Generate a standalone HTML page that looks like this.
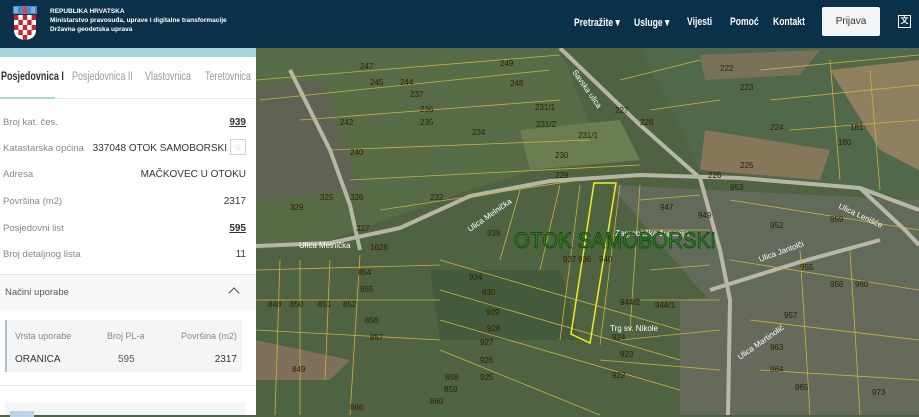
<!DOCTYPE html>
<html><head><meta charset="utf-8"><style>
*{margin:0;padding:0;box-sizing:border-box}
body{width:919px;height:415px;overflow:hidden;font-family:"Liberation Sans",sans-serif;position:relative;background:#4f6242}
.hdr{position:absolute;left:0;top:0;width:919px;height:48px;background:#0b3049;color:#fff}
.hdr .t{position:absolute;left:50px;font-size:6.5px;font-weight:bold}
.nav{position:absolute;top:16px;font-size:11px;font-weight:bold;transform:scaleX(0.78);transform-origin:left top;white-space:nowrap}
.btn{position:absolute;left:822px;top:7px;width:58px;height:29px;background:#f3f5f7;color:#333;font-size:10px;text-align:center;line-height:29px;border-radius:2px}
.panel{position:absolute;left:0;top:48px;width:256px;height:367px;background:#fff;color:#333}
.strip{position:absolute;left:0;top:0;width:256px;height:9px;background:#a8d5df}
.tabs{position:absolute;top:9px;left:0;width:256px;height:42px;border-bottom:1px solid #e6e6e6;font-size:11.5px;color:#999}
.tabs span{position:absolute;top:14px;transform:scaleX(0.78);transform-origin:left top;white-space:nowrap}
.row{position:absolute;left:3px;width:243px;font-size:9.5px}
.row .l{color:#888;position:absolute;left:0}
.row .r{position:absolute;right:0;color:#333;font-size:10px}
.u{text-decoration:underline;font-weight:bold;color:#1e3a55}
</style></head><body>
<div class="hdr">
<svg style="position:absolute;left:12px;top:6px" width="26" height="35" viewBox="0 0 26 35">
<rect x="1" y="0" width="24" height="8" fill="#4a88c8"/>
<rect x="2" y="1" width="4" height="6" fill="#7ab0e0"/><rect x="11" y="1" width="4" height="6" fill="#e04040"/><rect x="19" y="1" width="4" height="6" fill="#7ab0e0"/>
<path d="M2 9H24V24Q24 33 13 34Q2 33 2 24Z" fill="#fff"/>
<g fill="#d4202a">
<rect x="2" y="9" width="4.4" height="5"/><rect x="10.8" y="9" width="4.4" height="5"/><rect x="19.6" y="9" width="4.4" height="5"/>
<rect x="6.4" y="14" width="4.4" height="5"/><rect x="15.2" y="14" width="4.4" height="5"/>
<rect x="2" y="19" width="4.4" height="5"/><rect x="10.8" y="19" width="4.4" height="5"/><rect x="19.6" y="19" width="4.4" height="5"/>
<rect x="6.4" y="24" width="4.4" height="5"/><rect x="15.2" y="24" width="4.4" height="5"/>
<rect x="10.8" y="29" width="4.4" height="5"/>
</g></svg>
<div class="t" style="top:8px">REPUBLIKA HRVATSKA</div>
<div class="t" style="top:17px">Ministarstvo pravosuđa, uprave i digitalne transformacije</div>
<div class="t" style="top:26px">Državna geodetska uprava</div>
<div class="nav" style="left:574px">Pretražite ▾</div>
<div class="nav" style="left:634px">Usluge ▾</div>
<div class="nav" style="left:687px">Vijesti</div>
<div class="nav" style="left:730px">Pomoć</div>
<div class="nav" style="left:773px">Kontakt</div>
<div class="btn">Prijava</div>
<div style="position:absolute;left:898px;top:15px;width:13px;height:13px;border:1.5px solid #fff;font-size:8px;line-height:10px;text-align:center;font-weight:bold">文</div>
</div>

<svg style="position:absolute;left:256px;top:48px" width="663" height="367" viewBox="256 48 663 367">
<rect x="256" y="48" width="663" height="367" fill="#4f6242"/>
<g>
<polygon points="256,48 560,48 600,150 470,190 330,240 256,250" fill="#566b46"/>
<polygon points="640,48 919,48 919,200 830,185 700,170" fill="#52684a"/>
<polygon points="830,70 919,60 919,170 880,150" fill="#8f8060"/>
<polygon points="705,130 830,150 820,180 700,170" fill="#86765a"/>
<polygon points="700,55 820,50 800,75 705,80" fill="#7a715a"/>
<polygon points="256,90 320,80 360,190 256,200" fill="#5f6254"/>
<polygon points="610,185 919,200 919,300 760,350 700,290" fill="#626a5c"/>
<polygon points="256,340 350,360 330,380 256,380" fill="#7e705a"/>
<polygon points="430,270 560,270 580,340 440,340" fill="#455a3c"/>
<polygon points="680,300 919,280 919,415 680,415" fill="#666a5c"/>
<polygon points="520,130 620,120 640,160 530,170" fill="#6a7e52"/>
</g>
<g fill="none" stroke="#c9c5b6" stroke-width="4" opacity="0.85">
<path d="M256,246 L330,243 L400,228 L470,196 L550,181 L640,175 L740,178 L860,188 L919,210"/>
<path d="M560,48 L640,125 L700,178 L720,250 L730,300 L728,415"/>
<path d="M290,70 L330,150 L350,205 L360,250"/>
<path d="M710,290 L800,262 L880,240"/>
<path d="M860,188 L905,230 L919,245"/>
</g>
<g fill="none" stroke="#c9b340" stroke-width="0.8">
<path d="M256,80 L560,55 M260,100 L550,70 M300,120 L560,100 M330,150 L590,140 M350,180 L640,165 M380,210 L580,180"/>
<path d="M620,80 L700,60 M650,110 L720,100 M760,70 L919,55 M770,100 L919,85 M790,130 L919,120 M830,60 L840,180 M870,70 L880,190"/>
<path d="M520,190 L500,260 M560,185 L540,270 M580,185 L560,340 M620,185 L600,345 M640,185 L630,330"/>
<path d="M256,270 L440,265 M256,300 L440,300 M256,330 L440,340 M280,260 L275,415 M300,260 L300,415 M330,260 L325,380 M360,255 L350,415"/>
<path d="M440,260 L680,330 M440,290 L680,360 M440,320 L680,390 M440,350 L600,415"/>
<path d="M730,200 L919,230 M730,260 L919,290 M750,320 L919,340 M760,370 L919,380 M800,250 L810,415 M850,250 L860,415"/>
<path d="M640,200 L700,195 M640,230 L710,230 M650,270 L710,265 M640,300 L720,300 M620,340 L720,330 M600,360 L720,370"/>
</g>
<polygon points="594,183 616,183 590,343 571,334" fill="none" stroke="#f2ec25" stroke-width="1.5"/>
<g font-family="Liberation Sans,sans-serif" font-size="8" fill="#2e2200">
<text x="360" y="69">247</text><text x="500" y="66">249</text><text x="370" y="85">245</text><text x="400" y="85">244</text><text x="510" y="86">248</text><text x="720" y="71">222</text><text x="740" y="90">223</text><text x="615" y="113">227</text><text x="640" y="125">228</text><text x="770" y="130">224</text><text x="850" y="130">181</text><text x="838" y="145">180</text><text x="535" y="110">231/1</text><text x="536" y="127">231/2</text><text x="578" y="138">231/1</text><text x="555" y="158">230</text><text x="555" y="178">229</text><text x="740" y="168">225</text><text x="708" y="178">226</text><text x="472" y="135">234</text><text x="420" y="125">235</text><text x="420" y="112">236</text><text x="410" y="97">237</text><text x="340" y="125">242</text><text x="350" y="155">240</text><text x="320" y="200">325</text><text x="430" y="200">232</text><text x="290" y="210">329</text><text x="350" y="200">326</text><text x="356" y="231">327</text><text x="370" y="250">1626</text><text x="487" y="236">939</text><text x="563" y="262">937</text><text x="578" y="262">936</text><text x="599" y="262">940</text><text x="469" y="280">934</text><text x="482" y="295">930</text><text x="486" y="315">929</text><text x="487" y="331">928</text><text x="480" y="345">927</text><text x="480" y="363">926</text><text x="480" y="380">925</text><text x="358" y="275">854</text><text x="360" y="292">855</text><text x="365" y="323">856</text><text x="370" y="340">857</text><text x="268" y="307">848</text><text x="290" y="307">850</text><text x="318" y="307">851</text><text x="343" y="307">852</text><text x="292" y="372">849</text><text x="445" y="380">858</text><text x="444" y="392">859</text><text x="430" y="404">860</text><text x="350" y="410">866</text><text x="800" y="270">955</text><text x="830" y="287">956</text><text x="855" y="287">960</text><text x="784" y="318">957</text><text x="770" y="350">963</text><text x="770" y="372">964</text><text x="795" y="390">965</text><text x="872" y="395">973</text><text x="612" y="340">924</text><text x="620" y="357">923</text><text x="612" y="378">922</text><text x="655" y="308">944/1</text><text x="620" y="305">944/2</text><text x="660" y="210">947</text><text x="730" y="190">953</text><text x="830" y="222">959</text><text x="698" y="218">949</text><text x="770" y="228">952</text>
</g>
<g font-family="Liberation Sans,sans-serif" font-size="8" fill="#fff">
<text x="299" y="248">Ulica Melnička</text>
<text x="470" y="232" transform="rotate(-35 470 232)">Ulica Melnička</text>
<text x="610" y="331">Trg sv. Nikole</text>
<text x="615" y="236">Zagrebačka županija</text>
<text x="572" y="72" transform="rotate(55 572 72)">Savska ulica</text>
<text x="760" y="262" transform="rotate(-20 760 262)">Ulica Jantolči</text>
<text x="740" y="360" transform="rotate(-35 740 360)">Ulica Martinolić</text>
<text x="838" y="208" transform="rotate(25 838 208)">Ulica Lenišće</text>
</g>
<text x="514" y="248" font-family="Liberation Sans,sans-serif" font-size="22" fill="#2a8a1f" stroke="#0c3a0a" stroke-width="0.7" textLength="202" lengthAdjust="spacingAndGlyphs">OTOK SAMOBORSKI</text>
</svg>

<div class="panel">
<div class="strip"></div>
<div class="tabs">
<span style="left:1px;color:#333;font-weight:bold">Posjedovnica I</span>
<span style="left:72px">Posjedovnica II</span>
<span style="left:145px">Vlastovnica</span>
<span style="left:205px">Teretovnica</span>
<div style="position:absolute;left:0;bottom:-1px;width:55px;height:2px;background:#a8d5df"></div>
</div>
<div class="row" style="top:69px"><span class="l">Broj kat. čes.</span><span class="r u">939</span></div>
<div class="row" style="top:95px"><span class="l">Katastarska općina</span><span class="r" style="right:19px">337048 OTOK SAMOBORSKI</span><span style="position:absolute;right:0;top:-4px;width:16px;height:16px;border:1px solid #c8d6e0;color:#a8c8e0;font-size:9px;text-align:center;line-height:14px">☆</span></div>
<div class="row" style="top:121px"><span class="l">Adresa</span><span class="r">MAČKOVEC U OTOKU</span></div>
<div class="row" style="top:148px"><span class="l">Površina (m2)</span><span class="r">2317</span></div>
<div class="row" style="top:175px"><span class="l">Posjedovni list</span><span class="r u">595</span></div>
<div class="row" style="top:201px"><span class="l">Broj detaljnog lista</span><span class="r">11</span></div>
<div style="position:absolute;top:226px;left:0;width:256px;height:36px;background:#f7f8f9;border-top:1px solid #e6e6e6">
<span style="position:absolute;left:5px;top:12px;font-size:9.5px;color:#555">Načini uporabe</span>
<span style="position:absolute;left:230px;top:14px;width:8px;height:8px;border-left:1.3px solid #444;border-top:1.3px solid #444;transform:rotate(45deg)"></span>
</div>
<div style="position:absolute;top:272px;left:5px;width:237px;height:52px;background:#f4f5f6;border-left:2px solid #a8c0d0">
<span style="position:absolute;left:8px;top:11px;font-size:9px;color:#888">Vrsta uporabe</span>
<span style="position:absolute;left:100px;top:11px;font-size:9px;color:#888">Broj PL-a</span>
<span style="position:absolute;right:5px;top:11px;font-size:9px;color:#888">Površina (m2)</span>
<span style="position:absolute;left:8px;top:34px;font-size:10px;color:#333">ORANICA</span>
<span style="position:absolute;left:111px;top:34px;font-size:10px;color:#555">595</span>
<span style="position:absolute;right:5px;top:34px;font-size:10px;color:#333">2317</span>
</div>
<div style="position:absolute;top:337px;left:0;width:256px;border-top:1px solid #e6e6e6"></div>
<div style="position:absolute;top:355px;left:5px;width:240px;height:12px;background:#f4f5f6"><div style="position:absolute;left:5px;top:8px;width:24px;height:6px;background:#bcd6e8"></div></div>
</div>
</body></html>
